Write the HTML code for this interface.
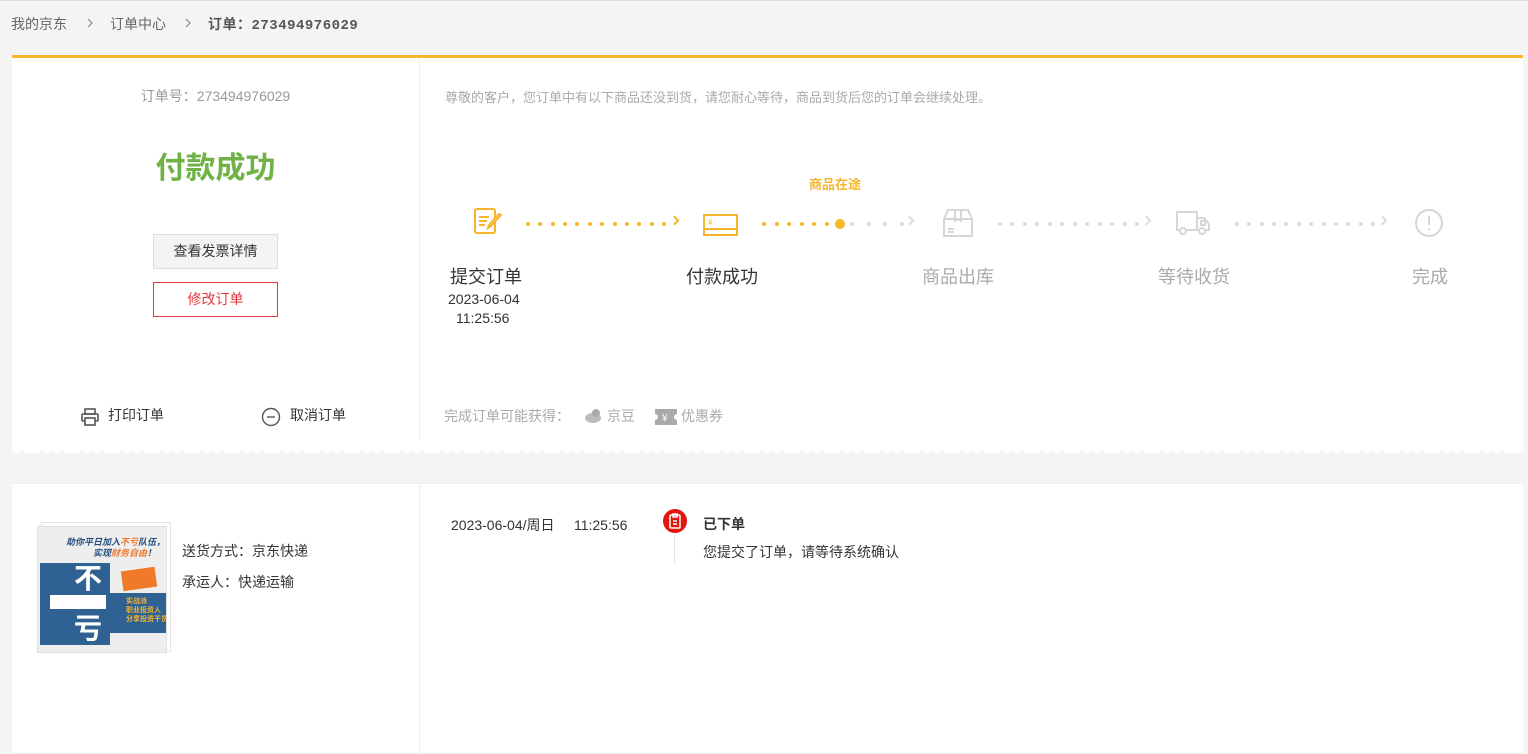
<!DOCTYPE html>
<html><head><meta charset="utf-8">
<style>
*{margin:0;padding:0;box-sizing:border-box}
body{width:1528px;height:749px;overflow:hidden;background:#f4f4f4;font-family:"Liberation Sans","Noto Sans CJK SC",sans-serif;color:#333;position:relative}
.a{position:absolute;white-space:nowrap}
.card{position:absolute;left:12px;width:1511px;background:#fff}
.dot{position:absolute;width:4px;height:4px;border-radius:50%}
</style></head><body>
<div class="a" style="left:0;top:0;width:1528px;height:1px;background:#ddd"></div>
<div class="a" style="left:11px;top:14px;font-size:14px;color:#666">我的京东</div>
<svg class="a" style="left:86px;top:18px" width="8" height="10" viewBox="0 0 8 10" fill="none" stroke="#888" stroke-width="1.2"><path d="M2 1l4 4-4 4"/></svg>
<div class="a" style="left:110px;top:14px;font-size:14px;color:#666">订单中心</div>
<svg class="a" style="left:184px;top:18px" width="8" height="10" viewBox="0 0 8 10" fill="none" stroke="#888" stroke-width="1.2"><path d="M2 1l4 4-4 4"/></svg>
<div class="a" style="left:208px;top:14px;font-size:14px;color:#555;font-weight:bold;letter-spacing:0.5px">订单：<span style="font-family:'Liberation Mono',monospace;font-size:14px">273494976029</span></div>

<div class="card" style="top:55px;height:398px;border-top:3px solid #f7b52c">
  <div class="a" style="left:407px;top:0;width:1px;height:382px;background:#eee"></div>
  <div class="a" style="left:0;width:407px;top:28px;text-align:center;font-size:14px;color:#999">订单号：273494976029</div>
  <div class="a" style="left:0;width:407px;top:85px;text-align:center;font-size:30px;font-weight:bold;color:#71b247">付款成功</div>
  <div class="a" style="left:141px;top:176px;width:125px;height:35px;background:#f4f4f4;border:1px solid #ddd;text-align:center;line-height:32px;font-size:14px;color:#333">查看发票详情</div>
  <div class="a" style="left:141px;top:224px;width:125px;height:35px;background:#fff;border:1px solid #e4393c;text-align:center;line-height:32px;font-size:14px;color:#e4393c">修改订单</div>
  <svg class="a" style="left:68px;top:349px" width="20" height="20" viewBox="0 0 20 20" fill="none" stroke="#555" stroke-width="1.6"><rect x="5" y="2" width="10" height="5"/><rect x="2" y="7" width="16" height="7" rx="1"/><rect x="5" y="11" width="10" height="7" fill="#fff"/></svg>
  <div class="a" style="left:96px;top:347px;font-size:14px">打印订单</div>
  <svg class="a" style="left:249px;top:349px" width="20" height="20" viewBox="0 0 20 20" fill="none" stroke="#555" stroke-width="1.4"><circle cx="10" cy="10" r="8.5"/><path d="M6 10h8"/></svg>
  <div class="a" style="left:278px;top:347px;font-size:14px">取消订单</div>

  <div class="a" style="left:433px;top:29px;font-size:13px;color:#aaa">尊敬的客户，您订单中有以下商品还没到货，请您耐心等待，商品到货后您的订单会继续处理。</div>
  <div class="a" style="left:797px;top:116px;font-size:13px;color:#f7b52c;font-weight:bold">商品在途</div>

  <svg class="a" style="left:461px;top:149px" width="32" height="30" viewBox="0 0 32 30" fill="none" stroke="#f7b52c" stroke-width="2"><rect x="2" y="2" width="20" height="24" rx="2"/><path d="M6 10h10M6 14h8M6 18h6"/><path d="M28 8l-10 11-3 2 1-3 10-11z" fill="#fff"/></svg>
  <svg class="a" style="left:691px;top:155px" width="36" height="24" viewBox="0 0 36 24" fill="none" stroke="#f7b52c" stroke-width="2"><rect x="1" y="2" width="33" height="20"/><path d="M1 16h33"/><text x="5" y="12" font-size="8" fill="#f7b52c" stroke="none" font-family="Liberation Sans">¥</text></svg>
  <svg class="a" style="left:930px;top:149px" width="32" height="32" viewBox="0 0 32 32" fill="none" stroke="#d6d6d6" stroke-width="2"><path d="M2 12l4-9h20l4 9v17H2z"/><path d="M2 12h28M13 3v11l3-2 3 2V3M6 22h6M6 25h6"/></svg>
  <svg class="a" style="left:1163px;top:151px" width="36" height="28" viewBox="0 0 36 28" fill="none" stroke="#d6d6d6" stroke-width="2"><path d="M2 3h20v18H2zM22 9h7l5 6v6H22"/><rect x="26" y="12" width="4" height="4"/><circle cx="8" cy="22" r="3" fill="#fff"/><circle cx="27" cy="22" r="3" fill="#fff"/></svg>
  <svg class="a" style="left:1402px;top:150px" width="30" height="30" viewBox="0 0 30 30" fill="none" stroke="#d6d6d6" stroke-width="2"><circle cx="15" cy="15" r="13"/><path d="M15 8v9M15 20v2"/></svg>

  <div id="dots"></div>
  <div class="a" style="left:438px;top:205px;font-size:18px">提交订单</div>
  <div class="a" style="left:436px;top:233px;font-size:14px">2023-06-04</div>
  <div class="a" style="left:444px;top:252px;font-size:14px">11:25:56</div>
  <div class="a" style="left:674px;top:205px;font-size:18px">付款成功</div>
  <div class="a" style="left:910px;top:205px;font-size:18px;color:#aaa">商品出库</div>
  <div class="a" style="left:1146px;top:205px;font-size:18px;color:#aaa">等待收货</div>
  <div class="a" style="left:1400px;top:205px;font-size:18px;color:#aaa">完成</div>

  <div class="a" style="left:432px;top:348px;font-size:14px;color:#aaa">完成订单可能获得：</div>
  <svg class="a" style="left:572px;top:350px" width="20" height="16" viewBox="0 0 20 16"><ellipse cx="9" cy="10" rx="8" ry="5" fill="#bbb"/><circle cx="12" cy="5" r="4" fill="#aaa"/></svg>
  <div class="a" style="left:595px;top:348px;font-size:14px;color:#aaa">京豆</div>
  <svg class="a" style="left:643px;top:351px" width="22" height="16" viewBox="0 0 22 16"><path d="M0 0h22v5a3 3 0 0 0 0 6v5H0v-5a3 3 0 0 0 0-6z" fill="#aaa"/><text x="7" y="12" font-size="10" fill="#fff" font-family="Liberation Sans">¥</text></svg>
  <div class="a" style="left:669px;top:348px;font-size:14px;color:#aaa">优惠券</div>
</div>
<div class="a" style="left:12px;top:450px;width:1511px;height:6px;background:radial-gradient(circle at 5px 0,#fff 3.5px,#f0f0f0 4px,transparent 5px) 0 0/10px 6px repeat-x"></div>

<div class="card" style="top:483px;height:270px;border-top:1px solid #eee">
  <div class="a" style="left:407px;top:0;width:1px;height:270px;background:#eee"></div>
  <div class="a" style="left:29px;top:38px;width:130px;height:130px;border:1px solid #e6e6e6;background:#fff"></div>
  <div class="a" style="left:25px;top:42px;width:130px;height:127px;background:#eee;border:1px solid #e0e0e0;overflow:hidden">
    <div class="a" style="left:28px;top:8px;font-size:9px;font-weight:bold;color:#24507e;font-style:italic">助你平日加入<span style="color:#f07a2a">不亏</span>队伍，</div>
    <div class="a" style="left:55px;top:19px;font-size:9px;font-weight:bold;color:#24507e;font-style:italic">实现<span style="color:#f07a2a">财务自由</span>！</div>
    <div class="a" style="left:2px;top:36px;width:70px;height:82px;background:#2f6193"></div>
    <div class="a" style="left:36px;top:30px;font-size:28px;color:#fff;font-weight:bold">不</div>
    <div class="a" style="left:36px;top:80px;font-size:28px;color:#fff;font-weight:bold">亏</div>
    <div class="a" style="left:12px;top:68px;width:56px;height:14px;background:#fff"></div>
    <div class="a" style="left:72px;top:66px;width:58px;height:40px;background:#2f6193"></div>
    <div class="a" style="left:84px;top:42px;width:34px;height:20px;background:#f07a2a;transform:rotate(-8deg)"></div>
    <div class="a" style="left:88px;top:70px;font-size:7px;color:#f7b52c;font-weight:bold;line-height:9px">实战派<br>职业投资人<br>分享投资干货</div>
  </div>
  <div class="a" style="left:170px;top:57px;font-size:14px">送货方式：京东快递</div>
  <div class="a" style="left:170px;top:88px;font-size:14px">承运人：快递运输</div>
  <div class="a" style="left:439px;top:31px;font-size:14px">2023-06-04/周日&nbsp;&nbsp;&nbsp;&nbsp;&nbsp;11:25:56</div>
  <div class="a" style="left:662px;top:50px;width:1px;height:30px;background:#e6e6e6"></div>
  <div class="a" style="left:651px;top:25px;width:24px;height:24px;border-radius:50%;background:#e4140f"></div>
  <svg class="a" style="left:656px;top:29px" width="14" height="16" viewBox="0 0 14 16" fill="none" stroke="#fff" stroke-width="1.5"><rect x="2" y="2" width="10" height="13" rx="1"/><path d="M5 1h4v3H5zM5 8h4M5 11h4"/></svg>
  <div class="a" style="left:691px;top:30px;font-size:14px;font-weight:bold">已下单</div>
  <div class="a" style="left:691px;top:58px;font-size:14px">您提交了订单，请等待系统确认</div>
</div>
<script>
var d=document.getElementById('dots'),h='';
function row(x0,x1,y,c,n){for(var i=0;i<n;i++){var x=x0+(x1-x0)*i/(n-1);h+='<div class="dot" style="left:'+x+'px;top:'+y+'px;background:'+c+'"></div>';}}
row(514,650,164,'#f7b52c',12);
row(750,813,164,'#f7b52c',6);
row(838,888,164,'#ddd',4);
row(986,1123,164,'#ddd',12);
row(1223,1359,164,'#ddd',12);
h+='<div class="dot" style="left:823px;top:161px;width:10px;height:10px;background:#f7b52c"></div>';
function arr(x,c){h+='<div class="a" style="left:'+x+'px;top:159px;width:7px;height:7px;border-top:2px solid '+c+';border-right:2px solid '+c+';transform:rotate(45deg)"></div>';}
arr(659,'#f7b52c');arr(894,'#ddd');arr(1131,'#ddd');arr(1367,'#ddd');
d.outerHTML=h;
</script>
</body></html>
